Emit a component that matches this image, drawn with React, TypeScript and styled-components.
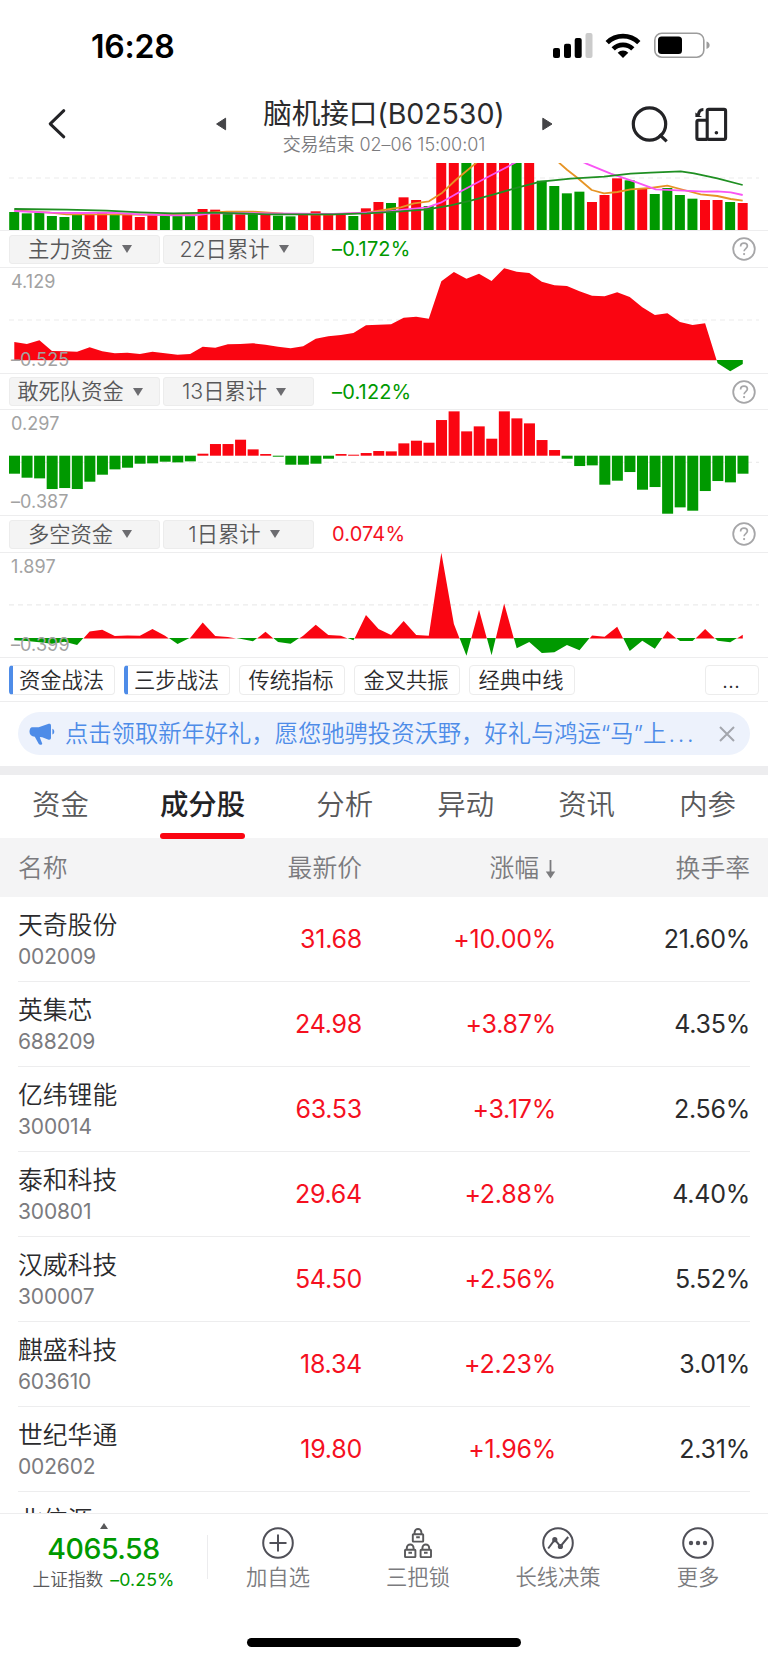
import React from 'react';
import styled, { createGlobalStyle } from 'styled-components';

const RED = '#fa0511';
const GREEN = '#009900';

const Global = createGlobalStyle`
  * { box-sizing: border-box; }
  body {
    margin: 0;
    background: #fff;
    font-family: Inter, "Noto Sans CJK SC", sans-serif;
    font-weight: 350;
    color: #2b2b2d;
  }
`;

const Screen = styled.div`
  width: 768px;
  height: 1662px;
  display: flex;
  flex-direction: column;
  overflow: hidden;
  background: #fff;
  white-space: nowrap;
`;

/* ---------- status bar ---------- */
const StatusBar = styled.div`
  height: 92px;
  flex: none;
  display: flex;
  justify-content: space-between;
  padding: 0 56px 0 91px;
`;
const Clock = styled.div`
  font-size: 32px;
  line-height: 40px;
  font-weight: 600;
  letter-spacing: -0.2px;
  color: #000;
  margin-top: 27px;
`;
const StatusIcons = styled.svg`
  width: 162px;
  height: 32px;
  margin-top: 30px;
`;

/* ---------- header ---------- */
const Header = styled.header`
  height: 71px;
  flex: none;
  display: grid;
  grid-template-columns: 215px 338px 215px;
`;
const HeaderSide = styled.div<{ $end?: boolean }>`
  display: flex;
  align-items: flex-start;
  justify-content: ${p => (p.$end ? 'flex-end' : 'flex-start')};
  gap: 24px;
  padding: ${p => (p.$end ? '14px 39px 0 0' : '15px 0 0 46px')};
`;
const HeaderCenter = styled.div`
  display: flex;
  justify-content: space-between;
  padding-top: 25px;
`;
const Titles = styled.div`
  margin-top: -25px;
  text-align: center;
`;
const Title = styled.div`
  font-size: 28.6px;
  line-height: 34px;
  letter-spacing: -0.1px;
  font-weight: 400;
  margin-top: 5px;
`;
const Subtitle = styled.div`
  font-size: 18px;
  line-height: 24px;
  letter-spacing: -0.05px;
  margin-top: 2px;
  color: #7b7b7e;
`;

/* ---------- charts ---------- */
const Plot = styled.svg<{ $h: number }>`
  display: block;
  width: 768px;
  height: ${p => p.$h}px;
  flex: none;
`;
const Section = styled.section<{ $head: number; $plot: number }>`
  flex: none;
  border-top: 1px solid #ededee;
  display: grid;
  grid-template-rows: ${p => p.$head}px ${p => p.$plot}px;
`;
const SectionHead = styled.div`
  display: flex;
  align-items: center;
  padding: 0 12px 0 9px;
  border-bottom: 1px solid #ededee;
`;
const Picker = styled.div`
  width: 151px;
  height: 29px;
  margin-right: 3px;
  padding-right: 9px;
  display: flex;
  align-items: center;
  justify-content: center;
  gap: 9px;
  font-size: 21.3px;
  line-height: 27px;
  color: #58585a;
  background: #f4f4f4;
  border: 1px solid #ececec;
  border-radius: 3px;
`;
const Caret = styled.i`
  border: 5.5px solid transparent;
  border-top: 8px solid #6c6c70;
  border-bottom: 0;
`;
const Accum = styled.div<{ $up?: boolean }>`
  flex: 1;
  padding-left: 15px;
  font-size: 20px;
  font-weight: 390;
  letter-spacing: 0.15px;
  color: ${p => (p.$up ? '#f5101f' : GREEN)};
`;
const Help = styled.svg`
  width: 24px;
  height: 24px;
`;
const PlotWrap = styled.div`
  position: relative;
`;
const AxisLabel = styled.span<{ $low?: boolean }>`
  position: absolute;
  left: 11px;
  top: ${p => (p.$low ? 82 : 4)}px;
  font-size: 18px;
  line-height: 20px;
  font-weight: 380;
  letter-spacing: 0.1px;
  color: #a2a2a2;
`;

/* ---------- indicator chips ---------- */
const Chips = styled.div`
  flex: none;
  height: 45px;
  display: flex;
  gap: 9px;
  padding: 7px 9px 0;
  border-top: 1px solid #ededee;
  border-bottom: 1px solid #ededee;
`;
const Chip = styled.div<{ $mark?: boolean; $more?: boolean }>`
  width: ${p => (p.$more ? 54 : 106)}px;
  height: 30px;
  margin-left: ${p => (p.$more ? 'auto' : '0')};
  font-size: 21.3px;
  line-height: 28px;
  text-align: center;
  padding-right: ${p => (p.$mark ? 4 : 2)}px;
  border: 1px solid #ececec;
  border-left: ${p => (p.$mark ? '4px solid #4e8ce8' : '1px solid #ececec')};
  border-radius: 4px;
`;

/* ---------- notice ---------- */
const NoticeArea = styled.div`
  flex: none;
  height: 73px;
  padding: 10px 18px 0;
  border-bottom: 9px solid #ededef;
`;
const Notice = styled.div`
  height: 43px;
  border-radius: 22px;
  background: #edf2fc;
  color: #4e8ce8;
  display: flex;
  align-items: center;
  padding: 0 15px 0 11px;
`;
const NoticeText = styled.div`
  font-size: 23.3px;
  line-height: 40px;
  flex: 1;
  padding-left: 9px;
`;
const Ellipsis = styled.span`
  letter-spacing: 2.7px;
  margin-left: 2px;
`;

/* ---------- tabs ---------- */
const Tabs = styled.nav`
  flex: none;
  height: 63px;
  display: flex;
  justify-content: space-between;
  padding: 0 32px;
  position: relative;
`;
const Tab = styled.div<{ $on?: boolean }>`
  font-size: 28.4px;
  line-height: 60px;
  height: 64px;
  color: ${p => (p.$on ? '#232326' : '#58585a')};
  font-weight: ${p => (p.$on ? 500 : 350)};
  margin: ${p => (p.$on ? '0 7px' : '0')};
  &::after {
    content: "";
    display: ${p => (p.$on ? 'block' : 'none')};
    height: 6px;
    margin-top: -2px;
    border-radius: 3px;
    background: ${RED};
  }
`;

/* ---------- table ---------- */
const Table = styled.div`
  flex: none;
  height: 675px;
  overflow: hidden;
`;
const columns = '344px 194px 194px';
const HeadRow = styled.div`
  display: grid;
  grid-template-columns: ${columns};
  height: 59px;
  padding: 0 18px;
  line-height: 61px;
  font-size: 24.8px;
  color: #7b7b7e;
  background: #f4f4f5;
  & > *:not(:first-child) { margin-left: auto; }
`;
const HeadCell = styled.div`
  display: flex;
  align-items: center;
  gap: 6px;
`;
const FirstHead = styled.div`
  display: flex;
  justify-content: space-between;
`;
const Row = styled.div`
  display: grid;
  grid-template-columns: ${columns};
  height: 85px;
  margin: 0 18px;
  border-bottom: 1px solid #ededee;
`;
const Lead = styled.div`
  display: flex;
  justify-content: space-between;
`;
const Name = styled.div`
  font-size: 24.8px;
  line-height: 32px;
  margin-top: 12px;
`;
const Code = styled.div`
  font-size: 21px;
  line-height: 26px;
  margin-top: 3px;
  font-weight: 380;
  letter-spacing: -0.15px;
  color: #7b7b7e;
`;
const Num = styled.div<{ $up?: boolean }>`
  font-size: 25px;
  line-height: 85px;
  text-align: right;
  font-weight: 390;
  letter-spacing: -0.25px;
  color: ${p => (p.$up ? '#f5101f' : '#2b2b2d')};
`;

/* ---------- bottom bar ---------- */
const Bottom = styled.footer`
  flex: none;
  height: 149px;
  border-top: 1px solid #ededee;
  display: grid;
  grid-template-columns: 207px 561px;
  grid-template-rows: 124px 9px;
`;
const Index = styled.div`
  display: flex;
  flex-direction: column;
  align-items: center;
  padding-top: 9px;
`;
const UpMark = styled.i`
  border: 4px solid transparent;
  border-bottom: 6px solid #58585a;
  border-top: 0;
`;
const IndexValue = styled.div`
  font-size: 28.5px;
  line-height: 34px;
  font-weight: 500;
  margin-top: 3px;
  letter-spacing: -0.5px;
  color: ${GREEN};
`;
const IndexName = styled.div`
  display: flex;
  gap: 7px;
  font-size: 17.7px;
  line-height: 24px;
  margin-top: 2px;
  color: #58585a;
  & > b { font-weight: 400; color: ${GREEN}; letter-spacing: 0.1px; }
`;
const Actions = styled.div`
  display: grid;
  grid-template-columns: repeat(4, 1fr);
  height: 44px;
  margin-top: 21px;
  border-left: 1px solid #ececee;
`;
const Action = styled.div`
  display: flex;
  flex-direction: column;
  align-items: center;
  margin-top: -8px;
  font-size: 21.3px;
  line-height: 28px;
  gap: 4px;
  color: #7b7b7e;
  & > svg { flex: none; }
`;
const HomeIndicator = styled.div`
  grid-column: 1 / -1;
  width: 274px;
  height: 9px;
  margin: 0 auto;
  border-radius: 5px;
  background: #000;
`;

/* Plot data is in thirds of a pixel, measured from each plot's zero line. */
const STEP = 12.56;
const X0 = 14.3;
const px = (i: number) => X0 + i * STEP;

const volumeColors = 'GGGGGGRRGRRRGGGRRGRGRGGRRRRGRRGRRGRRGRRRGRGGGGRRRGRGGGGRRGR';
const volume = [57, 53, 55, 45, 42, 48, 51, 54, 51, 49, 42, 48, 48, 47, 50, 66, 64, 52, 50, 52, 51, 46, 44, 49, 59, 50, 49, 45, 68, 87, 84, 101, 93, 75, 204, 204, 204, 204, 204, 204, 204, 204, 151, 135, 113, 118, 87, 108, 158, 152, 129, 111, 129, 108, 97, 93, 93, 87, 84];
const main = [55, 49, 60, 28, 27, 26, 39, 27, 21, 23, 19, 26, 21, 17, 19, 41, 38, 48, 49, 51, 47, 41, 36, 42, 65, 72, 76, 82, 105, 107, 108, 128, 131, 125, 237, 265, 245, 260, 238, 276, 266, 262, 236, 225, 223, 207, 194, 192, 204, 190, 159, 136, 141, 115, 106, 111, -10, -34, -12];
const daring = [-54, -66, -68, -100, -97, -100, -78, -57, -41, -36, -24, -23, -18, -20, -17, 6, 35, 35, 48, 19, 5, -3, -27, -27, -24, -9, 5, 3, 8, 14, 13, 37, 45, 39, 107, 133, 73, 88, 51, 133, 112, 97, 47, 17, -9, -31, -29, -87, -75, -49, -102, -94, -174, -155, -165, -106, -76, -80, -54];
const longShort = [-7, -9, -13, -17, -11, -21, 21, 26, 7, 9, 8, 28, 8, -18, 1, 48, 7, 4, -2, -10, 20, -12, -17, 8, 41, 10, 8, -7, 70, 28, 10, 52, 10, 8, 257, 43, -53, 86, -52, 105, -31, -12, -45, -43, -21, -37, 9, 5, 35, -39, -8, -32, 22, -9, -9, 28, -8, -13, 11];

type Pt = [number, number];
const line = (pts: Pt[]) => pts.map(([x, y]) => `${(x / 3).toFixed(1)},${(y / 3).toFixed(1)}`).join(' ');
const maLong: Pt[] = [[43, 138], [200, 140], [320, 143], [420, 148], [520, 151], [640, 149], [800, 154], [1000, 154], [1100, 151], [1202, 145], [1282, 139], [1352, 127], [1412, 113], [1482, 94], [1552, 74], [1622, 56], [1712, 47], [1812, 41], [1892, 32], [1952, 29], [2042, 25], [2082, 31], [2152, 46], [2228, 66]];
const maMid: Pt[] = [[43, 144], [150, 149], [250, 150], [330, 149], [420, 154], [520, 157], [585, 157], [640, 150], [800, 151], [900, 152], [1000, 153], [1152, 147], [1212, 140], [1282, 133], [1322, 119], [1372, 91], [1452, 48], [1542, 1], [1592, -25], [1700, -25], [1757, 1], [1832, 32], [1912, 59], [1967, 79], [2052, 83], [2112, 86], [2152, 85], [2192, 88], [2228, 96]];
const maShort: Pt[] = [[43, 142], [150, 149], [200, 154], [330, 154], [580, 156], [630, 149], [680, 146], [760, 146], [850, 152], [930, 154], [1000, 154], [1100, 149], [1152, 141], [1202, 133], [1242, 121], [1287, 115], [1327, 89], [1367, 51], [1427, 1], [1460, -30], [1650, -30], [1679, 1], [1702, 21], [1732, 44], [1775, 81], [1812, 91], [1852, 87], [1892, 79], [1952, 75], [2002, 68], [2052, 81], [2102, 94], [2152, 99], [2192, 108], [2228, 113]];

const Dash = ({ y }: { y: number }) => (
  <line x1="9" x2="759" y1={y} y2={y} stroke="#ececec" strokeWidth="1.2" strokeDasharray="5 4" />
);

const VolumePlot = () => (
  <Plot $h={67} viewBox="0 0 768 67">
    <Dash y={15} />
    {volume.map((v, i) => (
      <rect key={i} x={px(i) - 5.1} y={68 - v / 3} width="10" height={v / 3} fill={volumeColors[i] === 'R' ? RED : GREEN} />
    ))}
    <g fill="none" strokeWidth="1.8" strokeLinejoin="round">
      <polyline points={line(maShort)} stroke="#e69425" />
      <polyline points={line(maMid)} stroke="#f955f4" />
      <polyline points={line(maLong)} stroke="#1f8f22" />
    </g>
  </Plot>
);

/* Splits a signed series into runs above and below zero, with exact crossings. */
const half = (data: number[], sign: 1 | -1, zero: number) => {
  const pts: string[] = [`${px(0)},${zero}`];
  data.forEach((v, i) => {
    const prev = data[i - 1];
    if (i > 0 && prev * v < 0) pts.push(`${px(i - 1 + prev / (prev - v))},${zero}`);
    pts.push(`${px(i)},${v * sign > 0 ? zero - v / 3 : zero}`);
  });
  pts.push(`${px(data.length - 1)},${zero}`);
  return pts.join(' ');
};

const AreaPlot = ({ data, zero, dash, h }: { data: number[]; zero: number; dash: number; h: number }) => (
  <Plot $h={h} viewBox={`0 0 768 ${h}`}>
    <Dash y={dash} />
    <polygon points={half(data, -1, zero - 0.4)} fill={GREEN} />
    <polygon points={half(data, 1, zero)} fill={RED} />
  </Plot>
);

const BarPlot = ({ data, zero, dash, h }: { data: number[]; zero: number; dash: number; h: number }) => (
  <Plot $h={h} viewBox={`0 0 768 ${h}`}>
    <Dash y={dash} />
    {data.map((v, i) => (
      <rect key={i} x={px(i) - 5.3} y={v > 0 ? zero - v / 3 : zero} width="11" height={Math.abs(v) / 3} fill={v > 0 ? RED : GREEN} />
    ))}
  </Plot>
);

const HelpIcon = () => (
  <Help viewBox="0 0 24 24" fill="none" stroke="#a6a6a8">
    <circle cx="12" cy="12" r="10.8" strokeWidth="1.8" />
    <path d="M8.6 9.4c0-2 1.4-3.3 3.4-3.3s3.4 1.2 3.4 3c0 2.4-3.3 2.6-3.3 5.2" strokeWidth="1.7" />
    <circle cx="12.1" cy="17.1" r="1.1" fill="#a6a6a8" stroke="none" />
  </Help>
);

type Fund = { title: string; days: string; value: string; up?: boolean; high: string; low: string; head: number; plot: number; children: React.ReactNode };
const FundSection = ({ title, days, value, up, high, low, head, plot, children }: Fund) => (
  <Section $head={head} $plot={plot}>
    <SectionHead>
      <Picker>{title}<Caret /></Picker>
      <Picker>{days}<Caret /></Picker>
      <Accum $up={up}>{value}</Accum>
      <HelpIcon />
    </SectionHead>
    <PlotWrap>
      {children}
      <AxisLabel>{high}</AxisLabel>
      <AxisLabel $low>{low}</AxisLabel>
    </PlotWrap>
  </Section>
);

const stocks = [
  ['天奇股份', '002009', '31.68', '+10.00%', '21.60%'],
  ['英集芯', '688209', '24.98', '+3.87%', '4.35%'],
  ['亿纬锂能', '300014', '63.53', '+3.17%', '2.56%'],
  ['泰和科技', '300801', '29.64', '+2.88%', '4.40%'],
  ['汉威科技', '300007', '54.50', '+2.56%', '5.52%'],
  ['麒盛科技', '603610', '18.34', '+2.23%', '3.01%'],
  ['世纪华通', '002602', '19.80', '+1.96%', '2.31%'],
];

const Lock = ({ x, y }: { x: number; y: number }) => (
  <g transform={`translate(${x} ${y})`}>
    <rect x="0" y="6" width="10.4" height="7.4" rx="0.6" />
    <path d="M1.8 6V4.2a3.4 3.4 0 0 1 6.8 0V6M3.4 9h3.6" />
  </g>
);

export default function App() {
  return (
    <>
      <Global />
      <Screen>
        <StatusBar>
          <Clock>16:28</Clock>
          <StatusIcons viewBox="550 30 162 32">
            <rect x="553" y="48" width="7" height="10" rx="2" />
            <rect x="564" y="43.7" width="7" height="14.3" rx="2" />
            <rect x="574.7" y="38" width="7" height="20" rx="2" />
            <rect x="585.5" y="33" width="7" height="25" rx="2" fill="#cbcbcb" />
            <g fill="none" stroke="#000" strokeWidth="4.7">
              <path d="M607.2 42.6a22.6 22.6 0 0 1 31.6 0" />
              <path d="M613.2 48.9a14 14 0 0 1 19.6 0" />
            </g>
            <path d="M623 58l-5.3-5.3a7.6 7.6 0 0 1 10.6 0z" />
            <rect x="654.8" y="33.2" width="49" height="24" rx="7" fill="none" stroke="#9c9c9c" strokeWidth="1.6" />
            <rect x="658" y="36.6" width="24" height="17.3" rx="3.5" />
            <path d="M706.5 41.5c4.2 1 4.2 6.4 0 7.4z" fill="#9c9c9c" />
          </StatusIcons>
        </StatusBar>

        <Header>
          <HeaderSide>
            <svg width="22" height="34" viewBox="0 0 22 34" fill="none" stroke="#232326" strokeWidth="3" strokeLinecap="round" strokeLinejoin="round">
              <path d="M17.8 3.7L4.2 16.8l13.6 13" />
            </svg>
          </HeaderSide>
          <HeaderCenter>
            <svg width="12" height="14" viewBox="0 0 12 14"><path d="M1.6 7L10.6 1.2v11.6z" fill="#444447" stroke="#444447" strokeWidth="1" strokeLinejoin="round" /></svg>
            <Titles>
              <Title>脑机接口(B02530)</Title>
              <Subtitle>交易结束 02–06 15:00:01</Subtitle>
            </Titles>
            <svg width="12" height="14" viewBox="0 0 12 14"><path d="M11 7L1.8 1.2v11.6z" fill="#444447" stroke="#444447" strokeWidth="1" strokeLinejoin="round" /></svg>
          </HeaderCenter>
          <HeaderSide $end>
            <svg width="38" height="38" viewBox="0 0 38 38" fill="none" stroke="#232326" strokeWidth="3.2">
              <circle cx="18.5" cy="18" r="16.2" />
              <path d="M28.3 28.3l7.4 7" />
            </svg>
            <svg width="36" height="38" viewBox="0 0 36 38" fill="none" stroke="#232326" strokeWidth="3.1" strokeLinejoin="round">
              <rect x="14.2" y="3.4" width="18.4" height="30" rx="1.6" />
              <path d="M14.2 14.2H5.2a1.3 1.3 0 0 0-1.3 1.3v16.6a1.3 1.3 0 0 0 1.3 1.3h9" />
              <path d="M10.4 3.5c-3 0-4.7 2.2-5 5.5" />
              <path d="M2.4 6.6v4.5h6.6z" fill="#232326" stroke="none" />
              <circle cx="23.4" cy="26.8" r="1.8" fill="#232326" stroke="none" />
            </svg>
          </HeaderSide>
        </Header>

        <VolumePlot />
        <FundSection title="主力资金" days="22日累计" value="–0.172%" high="4.129" low="–0.525" head={37} plot={105}>
          <AreaPlot data={main} zero={92.3} dash={52} h={105} />
        </FundSection>
        <FundSection title="敢死队资金" days="13日累计" value="–0.122%" high="0.297" low="–0.387" head={36} plot={105}>
          <BarPlot data={daring} zero={45.7} dash={52.3} h={105} />
        </FundSection>
        <FundSection title="多空资金" days="1日累计" value="0.074%" up high="1.897" low="–0.399" head={37} plot={104}>
          <AreaPlot data={longShort} zero={85.4} dash={51.8} h={104} />
        </FundSection>

        <Chips>
          <Chip $mark>资金战法</Chip>
          <Chip $mark>三步战法</Chip>
          <Chip>传统指标</Chip>
          <Chip>金叉共振</Chip>
          <Chip>经典中线</Chip>
          <Chip $more>...</Chip>
        </Chips>

        <NoticeArea>
          <Notice>
            <svg width="27" height="24" viewBox="0 0 27 24" fill="#4e8ce8">
              <path d="M3.2 5.2h6.5L19 2c1.8-.6 3 0 3 1.7v12c0 1.7-1.2 2.3-3 1.7l-5.800-2.200-2.400-.2.900 2.800 1.500 3.600c.4 1.300-2.600 2-3.400.6l-4-7.200C2.500 14.400.5 13 .5 9.800c0-2.600 1-4.600 2.700-4.600z" />
              <path d="M23.400 6.700c2.500.8 2.500 5 0 5.800z" />
            </svg>
            <NoticeText>点击领取新年好礼，愿您驰骋投资沃野，好礼与鸿运“马”上<Ellipsis>...</Ellipsis></NoticeText>
            <svg width="16" height="16" viewBox="0 0 16 16" stroke="#a3a6ad" strokeWidth="2"><path d="M1 1l14 14M15 1L1 15" /></svg>
          </Notice>
        </NoticeArea>

        <Tabs>
          <Tab>资金</Tab>
          <Tab $on>成分股</Tab>
          <Tab>分析</Tab>
          <Tab>异动</Tab>
          <Tab>资讯</Tab>
          <Tab>内参</Tab>
        </Tabs>

        <Table>
          <HeadRow>
            <FirstHead><span>名称</span><span>最新价</span></FirstHead>
            <HeadCell>
              涨幅
              <svg width="11" height="20" viewBox="0 0 11 20"><path d="M5.5 1v13" stroke="#7b7b7e" strokeWidth="1.8" /><path d="M.8 12.5h9.4L5.5 19.5z" fill="#7b7b7e" /></svg>
            </HeadCell>
            <HeadCell>换手率</HeadCell>
          </HeadRow>
          {stocks.map(([name, code, price, change, turnover]) => (
            <Row key={code}>
              <Lead>
                <div><Name>{name}</Name><Code>{code}</Code></div>
                <Num $up>{price}</Num>
              </Lead>
              <Num $up>{change}</Num>
              <Num>{turnover}</Num>
            </Row>
          ))}
          <Row><Name>北信源</Name></Row>
        </Table>

        <Bottom>
          <Index>
            <UpMark />
            <IndexValue>4065.58</IndexValue>
            <IndexName>上证指数<b>–0.25%</b></IndexName>
          </Index>
          <Actions>
            <Action>
              <svg width="32" height="32" viewBox="0 0 32 32" fill="none" stroke="#505058" strokeWidth="2"><circle cx="16" cy="16" r="14.8" /><path d="M7.5 16h17M16 7.5v17" /></svg>
              加自选
            </Action>
            <Action>
              <svg width="32" height="32" viewBox="0 0 32 32" fill="none" stroke="#58585a" strokeWidth="1.9"><Lock x={10.8} y={1.2} /><Lock x={3} y={16.7} /><Lock x={18.6} y={16.7} /></svg>
              三把锁
            </Action>
            <Action>
              <svg width="32" height="32" viewBox="0 0 32 32" fill="none" stroke="#505058" strokeWidth="2">
                <circle cx="16" cy="16" r="14.8" />
                <path d="M6.2 21.5l6.6-8.8 5.6 6.8 7.8-9.5" />
                <circle cx="12.8" cy="12.7" r="1.6" fill="#505058" />
                <circle cx="18.4" cy="19.5" r="1.6" fill="#505058" />
              </svg>
              长线决策
            </Action>
            <Action>
              <svg width="32" height="32" viewBox="0 0 32 32" fill="#505058"><circle cx="16" cy="16" r="14.8" fill="none" stroke="#505058" strokeWidth="2" /><circle cx="9" cy="16" r="2.2" /><circle cx="16" cy="16" r="2.2" /><circle cx="23" cy="16" r="2.2" /></svg>
              更多
            </Action>
          </Actions>
          <HomeIndicator />
        </Bottom>
      </Screen>
    </>
  );
}
